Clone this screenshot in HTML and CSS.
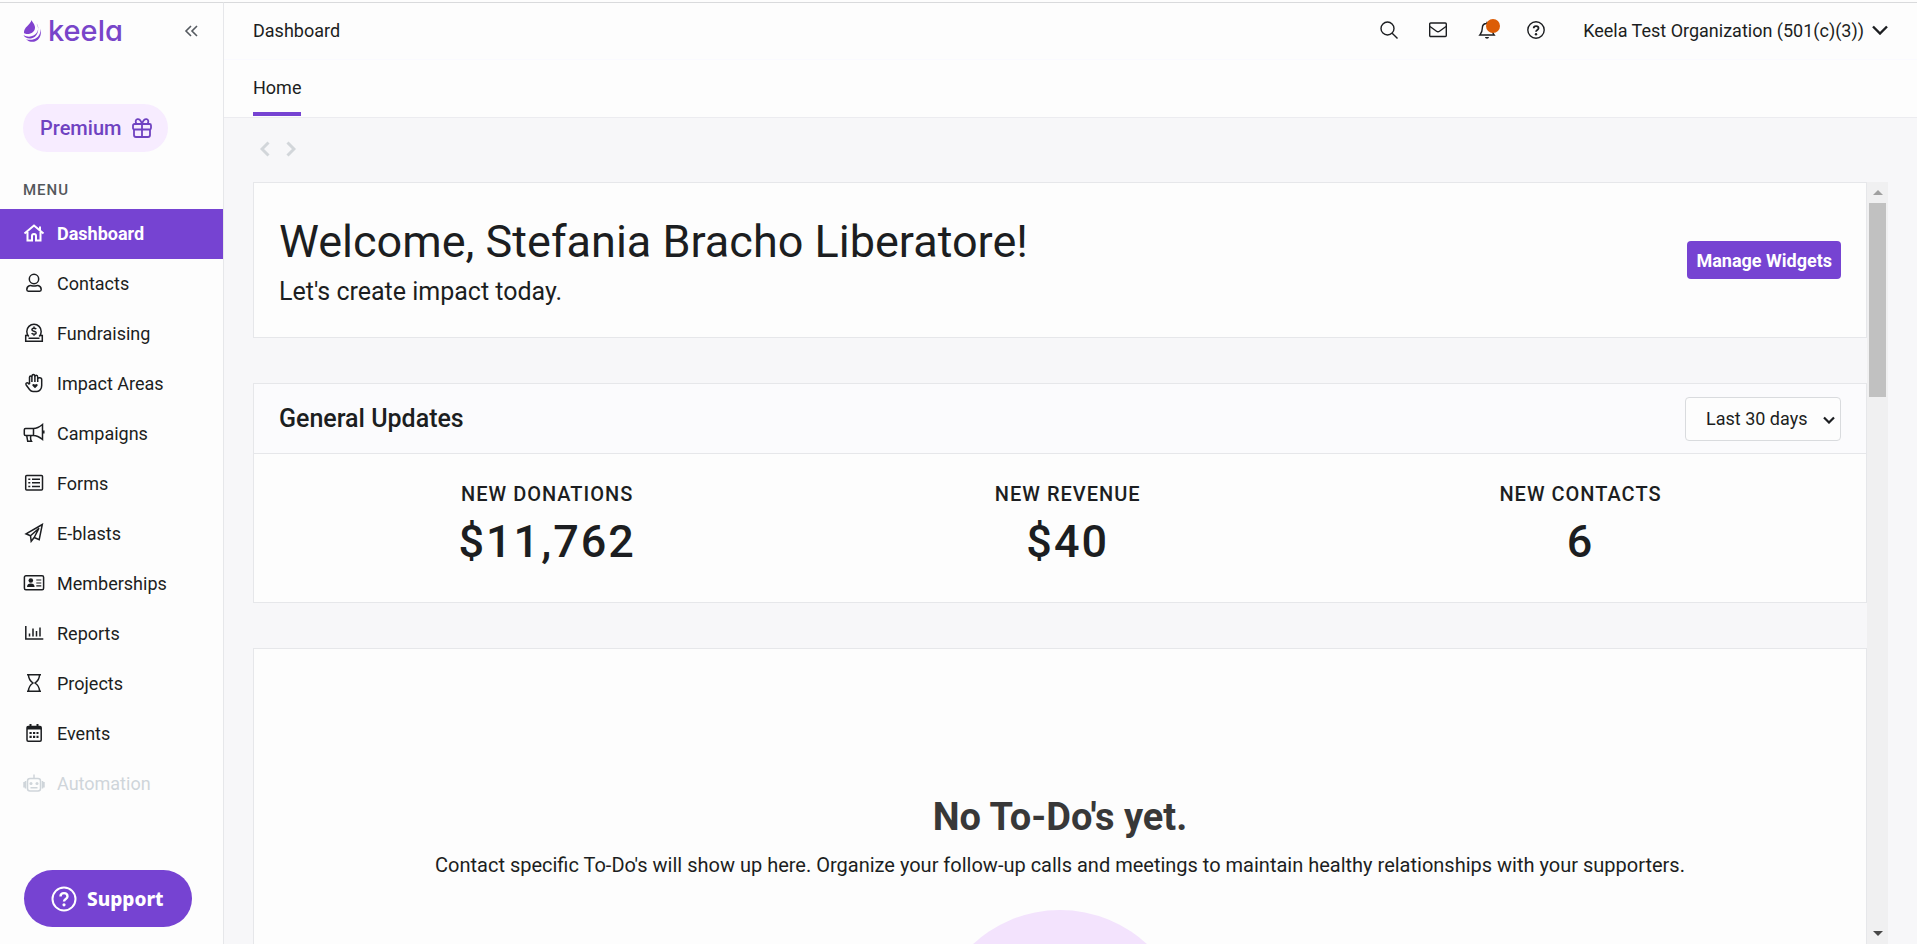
FILE: index.html
```
<!DOCTYPE html>
<html lang="en">
<head>
    <meta charset="UTF-8">
    <meta name="viewport" content="width=device-width, initial-scale=1.0">
    <title>Dashboard - Keela</title>
    <link rel="stylesheet" href="styles.css">
</head>
<body>
    <aside class="sidebar">
        <div class="brand">
            <a href="#" class="logo">
                <svg width="18" height="22" viewBox="0 0 18 22" fill="#8142cf">
                    <path d="M8.500 0c.5 2 3.500 4 3.500 7.500 0 4-3.500 6.500-7.500 6.500-1.500 0-2.500-.3-3.500-1C.5 7 7.500 5 8.500 0z"/>
                    <path d="M13.500 3.500c3.500 4 1.500 9.500-3 12-3 1.700-7 1.500-10-.5 1 2.500 4 4 7.500 3.500 6-1 9.500-8.500 5.500-15z"/>
                    <path d="M17.300 8.500c1 6-3.300 10.500-8.300 11.200-2.500.4-4.500 0-6-.8 2 2.300 5 3.300 8 2.800 5-.9 8.300-7 6.300-13.200z"/>
                </svg>
                <span>keela</span>
            </a>
            <button class="collapse" aria-label="Collapse menu">
                <svg width="14" height="14" viewBox="0 0 14 14" fill="none" stroke="#555a60" stroke-width="1.6"><path d="M7 2L2 7l5 5M13 2L8 7l5 5"/></svg>
            </button>
        </div>

        <button class="premium">
            Premium
            <svg width="20" height="20" viewBox="0 0 20 20" fill="none" stroke="#6f42c1" stroke-width="1.8" stroke-linejoin="round"><rect x="1" y="6" width="18" height="5.500" rx="1.500"/><path d="M2 11.500V17a2 2 0 0 0 2 2h12a2 2 0 0 0 2-2v-5.500M10 6v13M10 6C9 3 7 1 5.500 1.200 3.500 1.500 3.200 4 4.500 6M10 6c1-3 3-5 4.500-4.800 2 .3 2.300 2.800 1 4.800"/></svg>
        </button>

        <h2 class="menu-title">MENU</h2>
        <nav class="menu">
            <a href="#" class="active">
                <svg viewBox="0 0 22 20"><path d="M1.500 10.500L11 2.500l9.500 8M4.500 9v8.500H9V13a2 2 0 0 1 4 0v4.500h4.500V9M17 7V3.500"/></svg>
                Dashboard
            </a>
            <a href="#">
                <svg viewBox="0 0 22 20"><circle cx="11" cy="6" r="4.700"/><path d="M6.800 12.500C5 13 3.800 14.500 3.800 16.500c0 1 .5 1.700 1.500 1.700h11.400c1 0 1.500-.7 1.500-1.700 0-2-1.200-3.500-3-4-1.300-.4-2 .6-4.200.6s-2.900-1-4.200-.6z"/></svg>
                Contacts
            </a>
            <a href="#">
                <svg viewBox="0 0 22 20"><path d="M5.800 13.500A7.200 7.200 0 1 1 16.200 13.500M5 12.500H2.700v5.800h16.600v-5.800H17M5.500 15.200h11"/><path d="M13.200 6.200c-.6-1-4.200-1.400-4.300.5 0 2 4.400 1 4.300 3.200-.2 2-3.900 1.500-4.500.3M11 3.500v1.400M11 11.400v1.400"/></svg>
                Fundraising
            </a>
            <a href="#">
                <svg viewBox="0 0 22 20"><path d="M6.500 11V4.200c0-1.600 2.400-1.600 2.400 0 0-3.600 3-3.600 3 0 0-2.500 2.800-2.500 2.800 0V6c0-1.800 4-1.800 4 .5v6c0 3.500-2.200 6-4.700 6H10c-1.500 0-2.500-.7-3.500-2L3.200 12c-1-1.600.8-3 2-1.800L6.500 11.500M8.900 4v5M11.900 4v5M14.700 5.500V9"/><path d="M12 15.200l-2.500-2.500c-.9-1.200 1.200-2.600 2.500-1 1.300-1.600 3.400-.2 2.500 1z" fill="currentColor" stroke="none"/></svg>
                Impact Areas
            </a>
            <a href="#">
                <svg viewBox="0 0 22 20"><path d="M10.500 5.500H2.500c-.8 0-1.200.4-1.200 1.200v4.600c0 .8.400 1.200 1.200 1.200h8zM10.500 5.500c3.500 0 6-1.500 9-4v15c-3-2.500-5.500-4-9-4M3.700 12.500L4.700 18.300h3.800c-1.200-2-1.200-3.500-.6-5.500M20.800 7.500v3"/></svg>
                Campaigns
            </a>
            <a href="#">
                <svg viewBox="0 0 22 20"><rect x="2.700" y="2.500" width="16.800" height="14.500" rx="1"/><path d="M5.300 6.200h2M5.300 9.800h2M5.300 13.400h2M9 6.200h8M9 9.800h8M9 13.400h8"/></svg>
                Forms
            </a>
            <a href="#">
                <svg viewBox="0 0 22 20"><path d="M19.300 1.500L3 10.800l4.500 2 .7 5.500 3-3.800 5 2.200zM7.500 12.800L16 5.200l-4.800 9.300"/></svg>
                E-blasts
            </a>
            <a href="#">
                <svg viewBox="0 0 22 20"><rect x="1.400" y="2.800" width="19.200" height="14" rx="1.500"/><circle cx="7.800" cy="7.500" r="2.300" fill="currentColor" stroke="none"/><path d="M4 14c0-2.500 1.500-3.500 3.800-3.500s3.800 1 3.800 3.500z" fill="currentColor" stroke="none"/><path d="M13.300 7h5M13.300 10h5M13.300 12.800h5" stroke-width="1.200"/></svg>
                Memberships
            </a>
            <a href="#">
                <svg viewBox="0 0 22 20"><path d="M2.800 3v13h17.500M6.500 10.500v3M10 5.500v8M13.500 8v5.500M17 4.500v9"/></svg>
                Reports
            </a>
            <a href="#">
                <svg viewBox="0 0 22 20"><path d="M4 1.800h14M4 18.200h14M5.500 2c0 4.500 2 6.200 4.500 8-2.500 1.800-4.500 3.500-4.500 8M16.500 2c0 4.500-2 6.200-4.500 8 2.500 1.800 4.500 3.500 4.500 8"/></svg>
                Projects
            </a>
            <a href="#">
                <svg viewBox="0 0 22 20"><rect x="4" y="3.500" width="14.200" height="14.700" rx="1.200"/><path d="M4 5h14" stroke-width="3"/><path d="M7.500 1v3M14.500 1v3" stroke-width="2"/><path d="M6.500 10h9M6.500 13.800h9" stroke-width="2.200" stroke-dasharray="2.200 1.300"/></svg>
                Events
            </a>
            <a href="#" class="disabled">
                <svg viewBox="0 0 22 20"><rect x="4.500" y="5.500" width="13" height="12.500" rx="2.500"/><path d="M11 1.500v4M1 9v5.500M21 9v5.500M2.500 8v7.500M19.500 8v7.500M7.500 14.800h7" /><circle cx="8" cy="10.500" r="1.500" fill="currentColor" stroke="none"/><circle cx="14" cy="10.500" r="1.500" fill="currentColor" stroke="none"/></svg>
                Automation
            </a>
        </nav>

        <button class="support">
            <svg width="26" height="26" viewBox="0 0 26 26" fill="none" stroke="#fff" stroke-width="2"><circle cx="13" cy="13" r="11.500"/><path d="M9.500 10.500c0-4.500 7-4.500 7 0 0 2.500-3.500 2.500-3.500 5" stroke-width="2.400"/><circle cx="13" cy="18.800" r="1.600" fill="#fff" stroke="none"/></svg>
            Support
        </button>
    </aside>

    <div class="page">
        <header class="topbar">
            <h1>Dashboard</h1>
            <div class="tools">
                <button aria-label="Search">
                    <svg width="18" height="18" viewBox="0 0 18 18"><circle cx="7.500" cy="7.500" r="6.500"/><path d="M12.200 12.200L17.500 17.500"/></svg>
                </button>
                <button aria-label="Messages">
                    <svg width="18" height="18" viewBox="0 0 18 18"><rect x=".7" y="2" width="16.600" height="13.500" rx="1"/><path d="M1 5.500l6.500 4.700c1 .7 2 .7 3 0L17 5.500"/></svg>
                </button>
                <button aria-label="Notifications">
                    <svg width="18" height="18" viewBox="0 0 18 18"><path d="M9 2.500c-3 0-4.700 2-4.700 4.700C4.300 11 3.300 12 1.800 14h14.400c-1.500-2-2.500-3-2.500-6.800C13.700 4.500 12 2.500 9 2.500zM9 .8v1.700"/><path d="M7 16h4c-.2 2.200-3.800 2.200-4 0z" fill="currentColor" stroke="none"/></svg>
                    <span class="dot"></span>
                </button>
                <button aria-label="Help">
                    <svg width="18" height="18" viewBox="0 0 18 18"><circle cx="9" cy="9" r="8.200"/><path d="M6.700 7.300c0-3 4.800-3 4.800 0 0 1.700-2.500 1.700-2.500 3.500" stroke-width="1.800"/><circle cx="9" cy="13.200" r="1.200" fill="currentColor" stroke="none"/></svg>
                </button>
            </div>
            <button class="org">
                Keela Test Organization (501(c)(3))
                <svg width="16" height="10" viewBox="0 0 16 10"><path d="M1 1.500l7 7 7-7" stroke-width="2.400"/></svg>
            </button>
        </header>
        <nav class="tabs">
            <a href="#">Home</a>
        </nav>

        <main class="content">
            <div class="history">
                <button aria-label="Back"><svg width="10" height="16" viewBox="0 0 10 16"><path d="M8.500 1.500L2 8l6.500 6.500"/></svg></button>
                <button aria-label="Forward"><svg width="10" height="16" viewBox="0 0 10 16"><path d="M1.500 1.500L8 8l-6.500 6.500"/></svg></button>
            </div>

            <div class="viewport">
                <div class="widgets">
                    <section class="card welcome">
                        <div>
                            <h2>Welcome, Stefania Bracho Liberatore!</h2>
                            <p>Let's create impact today.</p>
                        </div>
                        <button class="manage">Manage Widgets</button>
                    </section>

                    <section class="card">
                        <div class="card-header">
                            <h3>General Updates</h3>
                            <div class="period">
                                <select aria-label="Period">
                                    <option>Last 30 days</option>
                                    <option>Last 60 days</option>
                                    <option>Last 90 days</option>
                                </select>
                                <svg width="12" height="8" viewBox="0 0 12 8"><path d="M1 1.500l5 5 5-5"/></svg>
                            </div>
                        </div>
                        <dl class="stats">
                            <div><dt>NEW DONATIONS</dt><dd>$11,762</dd></div>
                            <div><dt>NEW REVENUE</dt><dd>$40</dd></div>
                            <div><dt>NEW CONTACTS</dt><dd>6</dd></div>
                        </dl>
                    </section>

                    <section class="card todos">
                        <h3>No To-Do's yet.</h3>
                        <p>Contact specific To-Do's will show up here. Organize your follow-up calls and meetings to maintain healthy relationships with your supporters.</p>
                        <div class="circle"></div>
                    </section>
                </div>
                <div class="scrollbar">
                    <span class="arrow up"></span>
                    <span class="track"><span class="thumb"></span></span>
                    <span class="arrow down"></span>
                </div>
            </div>
        </main>
    </div>
</body>
</html>
```
FILE: styles.css
```
* {
    margin: 0;
    padding: 0;
    box-sizing: border-box;
}

body {
    display: flex;
    height: 100vh;
    overflow: hidden;
    padding-top: 2px;
    font-family: Roboto, "Liberation Sans", sans-serif;
    font-size: 18px;
    color: #1c1e21;
    background-color: #fdfdfd;
}

a {
    color: inherit;
    text-decoration: none;
}

button {
    font: inherit;
    color: inherit;
    background: none;
    border: none;
    cursor: pointer;
}

svg {
    display: block;
    flex-shrink: 0;
}

/* Sidebar */
.sidebar {
    display: flex;
    flex-direction: column;
    flex-shrink: 0;
    width: 224px;
    border-top: 1px solid #d9dadc;
    border-right: 1px solid #e6e7ea;
}

.brand {
    display: flex;
    align-items: center;
    justify-content: space-between;
    height: 56px;
    padding: 0 25px 0 23px;
}

.logo {
    display: flex;
    align-items: center;
    gap: 7px;
    font-family: Inter, sans-serif;
    font-size: 29px;
    font-weight: 500;
    line-height: 32px;
    font-feature-settings: "cv11";
    color: #7845c9;
}

.premium {
    display: flex;
    align-items: center;
    align-self: flex-start;
    gap: 11px;
    height: 48px;
    margin: 45px 0 0 23px;
    padding: 0 16px 0 17px;
    border-radius: 24px;
    font-size: 20px;
    font-weight: 500;
    color: #6f42c1;
    background-color: #f7ecff;
}

.menu-title {
    margin-top: 28px;
    padding-left: 23px;
    font-size: 15px;
    font-weight: 500;
    line-height: 20px;
    letter-spacing: 1px;
    color: #54585c;
}

.menu {
    margin-top: 9px;
}

.menu a {
    display: flex;
    align-items: center;
    gap: 12px;
    height: 50px;
    padding: 0 0 2px 23px;
}

.menu svg {
    width: 22px;
    height: 20px;
    fill: none;
    stroke: currentColor;
    stroke-width: 1.5;
}

.menu .active {
    font-weight: 700;
    color: #fff;
    background-color: #7643d2;
}

.menu .active svg {
    stroke-width: 2;
}

.menu .disabled {
    color: #cfd5da;
}

.support {
    display: flex;
    align-items: center;
    align-self: flex-start;
    gap: 10px;
    height: 57px;
    margin: auto 0 17px 24px;
    padding: 0 28px 0 27px;
    border-radius: 29px;
    font-family: "Noto Sans", "Open Sans", sans-serif;
    font-size: 19px;
    font-weight: 800;
    color: #fff;
    background-color: #7643d2;
}

/* Page */
.page {
    display: flex;
    flex: 1;
    flex-direction: column;
    min-width: 0;
    border-top: 1px solid #d9dadc;
}

.topbar {
    display: flex;
    align-items: center;
    height: 57px;
    padding: 0 29px 2px;
    border-bottom: 1px solid #fafaff;
}

.topbar h1 {
    font-size: 18px;
    font-weight: 400;
}

.topbar svg {
    fill: none;
    stroke: currentColor;
    stroke-width: 1.4;
}

.tools {
    display: flex;
    gap: 31px;
    margin-left: auto;
}

.tools button {
    position: relative;
}

.dot {
    position: absolute;
    top: -2px;
    right: -4px;
    width: 14px;
    height: 14px;
    border-radius: 50%;
    background-color: #dc5c05;
}

.org {
    display: flex;
    align-items: center;
    gap: 8px;
    margin-left: 38px;
}

.tabs {
    display: flex;
    height: 57px;
    padding-left: 29px;
}

.tabs a {
    height: 56px;
    line-height: 55px;
    border-bottom: 4px solid #7643d2;
}

.content {
    display: flex;
    flex: 1;
    flex-direction: column;
    min-height: 0;
    padding: 0 29px;
    border-top: 1px solid #ececf0;
    background-color: #f7f7f9;
}

.history {
    display: flex;
    flex-shrink: 0;
    align-items: center;
    gap: 16px;
    height: 64px;
    padding: 0 0 3px 7px;
}

.history svg {
    fill: none;
    stroke: #d2d6da;
    stroke-width: 3;
}

.viewport {
    display: flex;
    flex: 1;
    min-height: 0;
}

.widgets {
    flex: 1;
    min-width: 0;
    overflow: hidden;
}

/* Cards */
.card {
    margin-bottom: 45px;
    border: 1px solid #e6e7ea;
    background-color: #fdfdfd;
}

.welcome {
    display: flex;
    align-items: center;
    justify-content: space-between;
    padding: 30px 25px;
}

.welcome h2 {
    padding-top: 2px;
    font-size: 45px;
    font-weight: 400;
    line-height: 54px;
}

.welcome p {
    margin-top: 8px;
    font-size: 25px;
    line-height: 30px;
}

.manage {
    height: 38px;
    padding: 0 9px;
    border-radius: 4px;
    font-weight: 700;
    color: #fff;
    background-color: #7643d2;
}

.card-header {
    display: flex;
    align-items: center;
    justify-content: space-between;
    height: 70px;
    padding: 0 25px;
    border-bottom: 1px solid #e6e7ea;
    background-color: #fbfbfd;
}

.card-header h3 {
    font-size: 25px;
    font-weight: 500;
}

.period {
    position: relative;
}

.period select {
    width: 156px;
    height: 44px;
    padding-left: 20px;
    border: 1px solid #d9dbde;
    border-radius: 4px;
    font: inherit;
    color: inherit;
    background-color: #fdfdfd;
    appearance: none;
}

.period svg {
    position: absolute;
    top: 19px;
    right: 6px;
    fill: none;
    stroke: currentColor;
    stroke-width: 2.2;
    pointer-events: none;
}

.stats {
    display: flex;
    justify-content: space-around;
    padding: 26px 25px 32px;
    text-align: center;
}

.stats dt {
    font-size: 20px;
    font-weight: 500;
    line-height: 28px;
    letter-spacing: 1px;
}

.stats dd {
    margin-top: 6px;
    font-size: 45px;
    font-weight: 500;
    line-height: 56px;
    letter-spacing: 2px;
}

.todos {
    min-height: 600px;
    margin-bottom: 0;
    padding: 144px 25px 0;
    text-align: center;
}

.todos h3 {
    font-size: 38px;
    font-weight: 700;
    line-height: 48px;
    color: #383838;
}

.todos p {
    margin-top: 10px;
    font-size: 20px;
    line-height: 28px;
}

.circle {
    width: 256px;
    height: 256px;
    margin: 31px auto 0;
    border-radius: 50%;
    background-color: #f3e3fd;
}

/* Scrollbar */
.scrollbar {
    display: flex;
    flex-direction: column;
    flex-shrink: 0;
    width: 21px;
    padding: 0 2px;
    background-color: #f0f0f1;
}

.arrow {
    display: flex;
    align-items: center;
    justify-content: center;
    height: 21px;
}

.arrow::before {
    content: "";
    border: 5px solid transparent;
}

.up::before {
    border-top: none;
    border-bottom-color: #a0a0a0;
}

.down::before {
    border-bottom: none;
    border-top-color: #484848;
}

.track {
    flex: 1;
}

.thumb {
    display: block;
    height: 27%;
    background-color: #c1c1c1;
}
```
